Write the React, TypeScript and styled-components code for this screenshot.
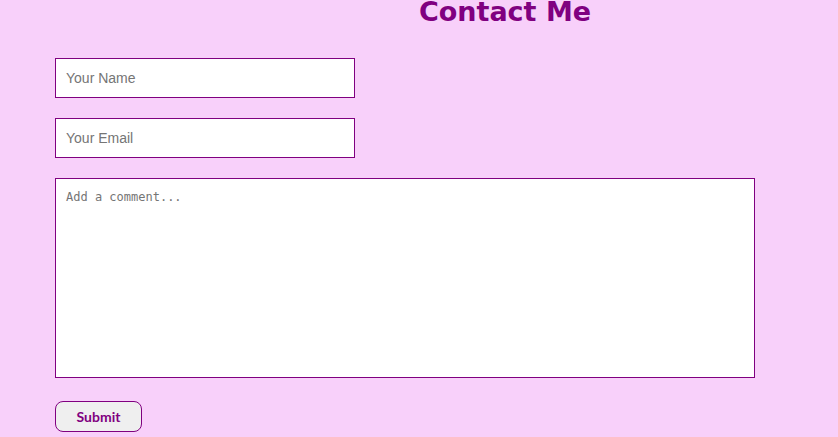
import React from "react";
import styled, { createGlobalStyle } from "styled-components";

const Global = createGlobalStyle`
  html, body { margin: 0; padding: 0; background: #f8d0fa; }
  body { font-family: "Liberation Sans", Arial, sans-serif; }
`;

const Page = styled.div`
  width: 838px;
  height: 437px;
  overflow: hidden;
  background: #f8d0fa;
`;

const Heading = styled.h1`
  margin: 0;
  padding-left: 172px;
  text-align: center;
  font-family: "DejaVu Sans", Verdana, sans-serif;
  font-weight: bold;
  font-size: 27px;
  line-height: 24px;
  color: #800080;
`;

const Form = styled.form`
  display: flex;
  flex-direction: column;
  align-items: flex-start;
  gap: 20px;
  padding: 34px 0 0 55px;
`;

const Field = styled.input`
  box-sizing: border-box;
  width: 300px;
  height: 40px;
  border: 1px solid #800080;
  background: #fff;
  padding: 0 10px;
  font-family: "Liberation Sans", Arial, sans-serif;
  font-size: 14px;
  outline: none;
  &::placeholder { color: #757575; }
`;

const Comment = styled.textarea`
  box-sizing: border-box;
  width: 700px;
  height: 200px;
  border: 1px solid #800080;
  background: #fff;
  padding: 11px 10px;
  font-family: "DejaVu Sans Mono", monospace;
  font-size: 12px;
  resize: none;
  outline: none;
  &::placeholder { color: #757575; }
`;

const Submit = styled.button`
  box-sizing: border-box;
  margin-top: 3px;
  width: 87px;
  height: 31px;
  border: 1px solid #800080;
  border-radius: 8px;
  background: #efefef;
  color: #800080;
  font-family: Lato, Arial, sans-serif;
  font-weight: bold;
  font-size: 14px;
`;

export default function App() {
  return (
    <Page>
      <Global />
      <Heading>Contact Me</Heading>
      <Form onSubmit={(e) => e.preventDefault()}>
        <Field type="text" placeholder="Your Name" />
        <Field type="email" placeholder="Your Email" />
        <Comment placeholder="Add a comment..." />
        <Submit type="submit">Submit</Submit>
      </Form>
    </Page>
  );
}
